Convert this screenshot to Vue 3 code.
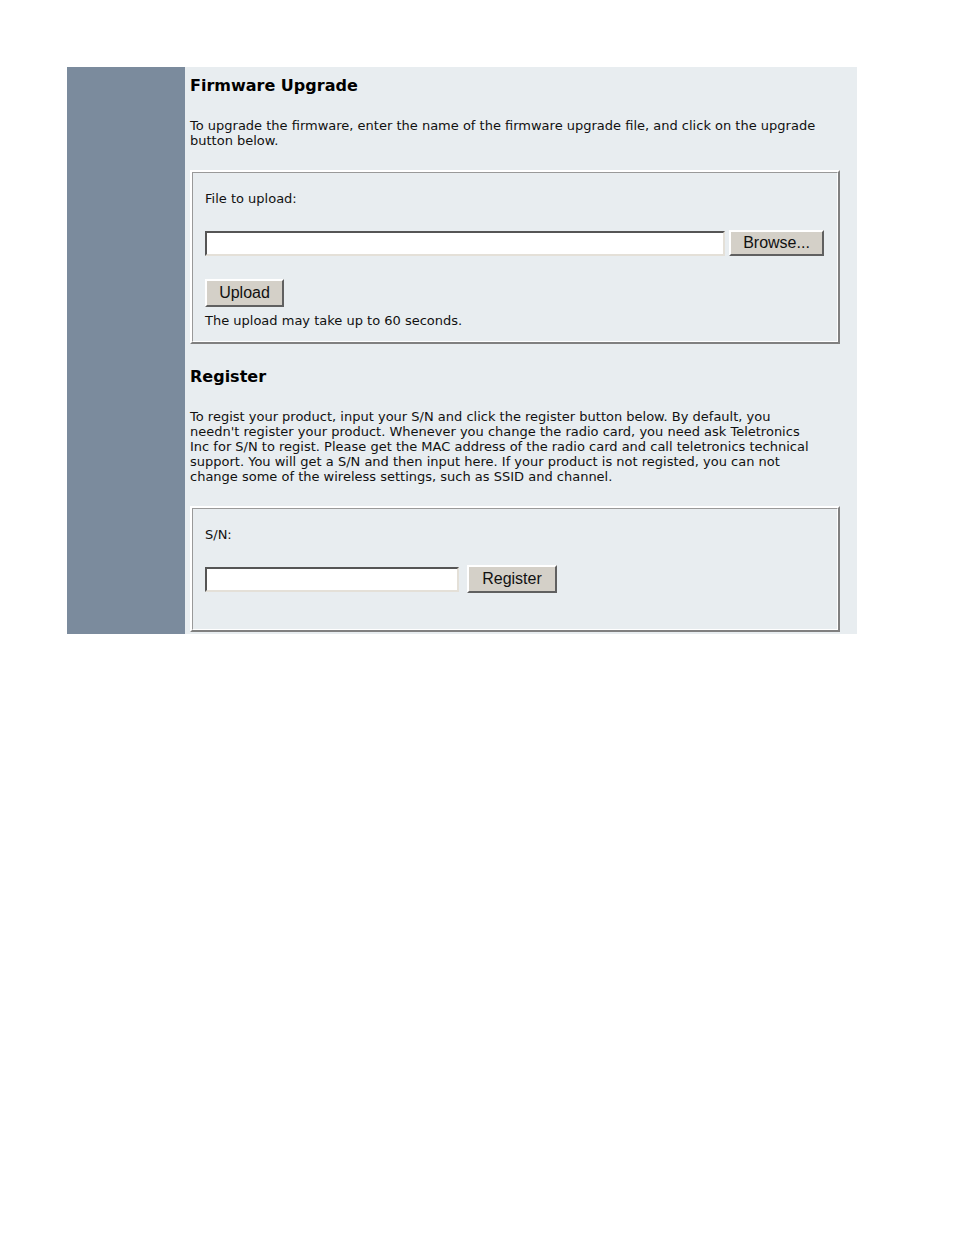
<script setup>
  import {ref} from 'vue'

  const fileName = ref('')
  const serial = ref('')
  const picker = ref(null)

  function browse(){
    picker.value.click()
  }

  function onPick(e){
    const file = e.target.files[0]
    if(!file) return
    fileName.value = file.name
  }
</script>

<template>
  <div class="page">
    <div class="sidebar"></div>
    <main class="content">
      <h2>Firmware Upgrade</h2>
      <p>
        To upgrade the firmware, enter the name of the firmware upgrade file, and click on the upgrade<br />
        button below.
      </p>
      <div class="frame">
        <form class="frame-inner" @submit.prevent>
          <label for="file">File to upload:</label>
          <div class="row file-row">
            <input id="file" class="field" type="text" v-model="fileName" />
            <button type="button" class="browse" @click="browse">Browse...</button>
            <input ref="picker" type="file" aria-label="Firmware file" hidden @change="onPick" />
          </div>
          <button type="submit" class="upload">Upload</button>
          <div class="note">The upload may take up to 60 seconds.</div>
        </form>
      </div>

      <h2 class="second">Register</h2>
      <p>
        To regist your product, input your S/N and click the register button below. By default, you<br />
        needn't register your product. Whenever you change the radio card, you need ask Teletronics<br />
        Inc for S/N to regist. Please get the MAC address of the radio card and call teletronics technical<br />
        support. You will get a S/N and then input here. If your product is not registed, you can not<br />
        change some of the wireless settings, such as SSID and channel.
      </p>
      <div class="frame">
        <form class="frame-inner" @submit.prevent>
          <label for="serial">S/N:</label>
          <div class="row serial-row">
            <input id="serial" class="field" type="text" v-model="serial" />
            <button type="submit" class="register">Register</button>
          </div>
        </form>
      </div>
    </main>
  </div>
</template>

<style>
body {
  background: #fff;
}
</style>

<style scoped>
.page {
  display: flex;
  margin: 67px 97px 0 67px;
  background: #e8edf0;
  color: #111;
  font-family: Verdana, "DejaVu Sans", sans-serif;
  font-size: 13px;
  line-height: 15px;
}

.sidebar {
  flex: 0 0 118px;
  background: #7b8b9d;
}

.content {
  flex: 1;
  min-width: 0;
  padding: 9px 17px 2px 5px;
}

h2 {
  margin: 0;
  font-size: 16px;
  line-height: 20px;
  color: #000;
}

.second {
  margin-top: 23px;
}

p {
  margin: 22px 0;
  white-space: nowrap;
}

/* raised outer edge around a sunken inner one */
.frame {
  border: 2px solid;
  border-color: #fff #808080 #808080 #fff;
}

.frame-inner {
  padding: 18px 13px 13px 12px;
  border: 1px solid;
  border-color: #999 #fff #fff #999;
}

label {
  display: block;
}

.row {
  display: flex;
  align-items: center;
}

.file-row {
  gap: 4px;
  margin: 24px 0 23px;
}

.serial-row {
  gap: 8px;
  margin: 23px 0;
}

.field {
  box-sizing: border-box;
  height: 25px;
  padding: 0 4px;
  border: 2px solid;
  border-color: #555 #e4e0d8 #e4e0d8 #555;
  background: #fff;
  font: inherit;
}

.file-row .field {
  flex: 1;
  min-width: 0;
}

.serial-row .field {
  width: 254px;
}

button {
  height: 28px;
  padding: 0;
  border: 2px solid;
  border-color: #fff #606060 #606060 #fff;
  background: #d4d0c8;
  color: #111;
  font-family: "Liberation Sans", Arial, sans-serif;
  font-size: 16px;
}

.browse {
  width: 95px;
  height: 26px;
}

.upload {
  display: block;
  width: 79px;
}

.register {
  width: 90px;
}

.note {
  margin-top: 6px;
}
</style>
